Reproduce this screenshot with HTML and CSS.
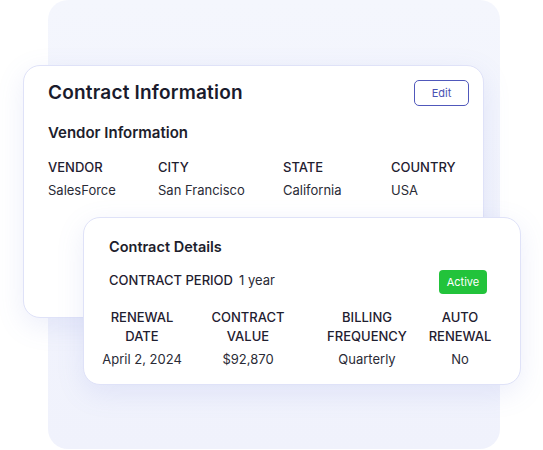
FILE: index.html
```html
<!DOCTYPE html>
<html lang="en">
<head>
<meta charset="utf-8">
<title>Contract Information</title>
<link rel="stylesheet" href="styles.css">
</head>
<body>
<div class="stage">
  <div class="panel"></div>

  <section class="card card-info">
    <div class="info-head">
      <h1 class="title">Contract Information</h1>
      <button class="btn-edit" type="button">Edit</button>
    </div>
    <h2 class="subtitle">Vendor Information</h2>
    <div class="vendor-grid">
      <div class="label">VENDOR</div>
      <div class="label">CITY</div>
      <div class="label">STATE</div>
      <div class="label">COUNTRY</div>
      <div class="value">SalesForce</div>
      <div class="value">San Francisco</div>
      <div class="value">California</div>
      <div class="value">USA</div>
    </div>
  </section>

  <section class="card card-details">
    <h2 class="subtitle details-title">Contract Details</h2>
    <div class="period-row">
      <div class="period"><span class="label">CONTRACT PERIOD</span><span class="value">1 year</span></div>
      <span class="badge">Active</span>
    </div>
    <div class="terms-grid">
      <div class="label">RENEWAL<br>DATE</div>
      <div class="label">CONTRACT<br>VALUE</div>
      <div class="label">BILLING<br>FREQUENCY</div>
      <div class="label">AUTO<br>RENEWAL</div>
      <div class="value">April 2, 2024</div>
      <div class="value">$92,870</div>
      <div class="value">Quarterly</div>
      <div class="value">No</div>
    </div>
  </section>
</div>
</body>
</html>
```
FILE: styles.css
```css
* { box-sizing: border-box; }

html, body {
  margin: 0;
  padding: 0;
  background: #ffffff;
}

body {
  font-family: "Inter", "Noto Sans", "Liberation Sans", sans-serif;
  color: #1c1c2b;
  width: 543px;
  height: 450px;
  overflow: hidden;
}

.stage {
  display: grid;
  grid-template-columns: 543px;
  grid-template-rows: 450px;
}

.panel,
.card {
  grid-area: 1 / 1;
  align-self: start;
  justify-self: start;
}

.panel {
  margin-left: 48px;
  width: 452px;
  height: 449px;
  border-radius: 20px;
  background: linear-gradient(180deg, #f4f6fd 0%, #f0f2fc 100%);
}

.card {
  background: #ffffff;
  border: 1px solid #dfe2f8;
  border-radius: 17px;
  box-shadow: 0 8px 28px rgba(110, 120, 220, 0.13);
}

.card-info {
  margin-left: 23px;
  margin-top: 65px;
  width: 461px;
  height: 253px;
  padding: 12px 14px 0 24px;
}

.info-head {
  display: flex;
  align-items: center;
  justify-content: space-between;
  height: 28px;
}

.title {
  margin: 0;
  font-size: 19px;
  font-weight: 600;
  letter-spacing: 0.2px;
  color: #1a1b2c;
}

.btn-edit {
  width: 55px;
  height: 26px;
  border: 1px solid #5058bb;
  border-radius: 5px;
  background: #ffffff;
  color: #4a52b3;
  font-family: inherit;
  font-size: 11px;
  padding: 0;
  margin-top: 2px;
}

.subtitle {
  margin: 0;
  font-size: 15px;
  font-weight: 600;
  color: #1d1e2c;
}

.card-info .subtitle {
  margin-top: 17px;
  line-height: 20px;
}

.label {
  font-size: 13px;
  font-weight: 500;
  color: #1f2030;
  line-height: 19px;
  white-space: nowrap;
}

.value {
  font-size: 13px;
  font-weight: 400;
  color: #2a2b36;
  line-height: 19px;
  white-space: nowrap;
}

.vendor-grid {
  display: grid;
  grid-template-columns: 110px 125px 108px auto;
  row-gap: 4px;
  margin-top: 15px;
}

.card-details {
  margin-left: 83px;
  margin-top: 217px;
  width: 438px;
  height: 168px;
  padding: 19px 33px 0 25px;
}

.details-title {
  font-size: 14.5px;
  line-height: 20px;
}

.period-row {
  display: flex;
  align-items: center;
  justify-content: space-between;
  margin-top: 10px;
  height: 26px;
}

.period {
  display: flex;
  gap: 6px;
}

.badge {
  background: #22c33b;
  color: #ffffff;
  font-size: 11px;
  border-radius: 4px;
  width: 48px;
  height: 24px;
  display: flex;
  align-items: center;
  justify-content: center;
  margin-top: 4px;
}

.terms-grid {
  display: grid;
  grid-template-columns: 84px 128px 110px 76px;
  margin-top: 15px;
  margin-left: -9px;
  row-gap: 4px;
  text-align: center;
}
```
